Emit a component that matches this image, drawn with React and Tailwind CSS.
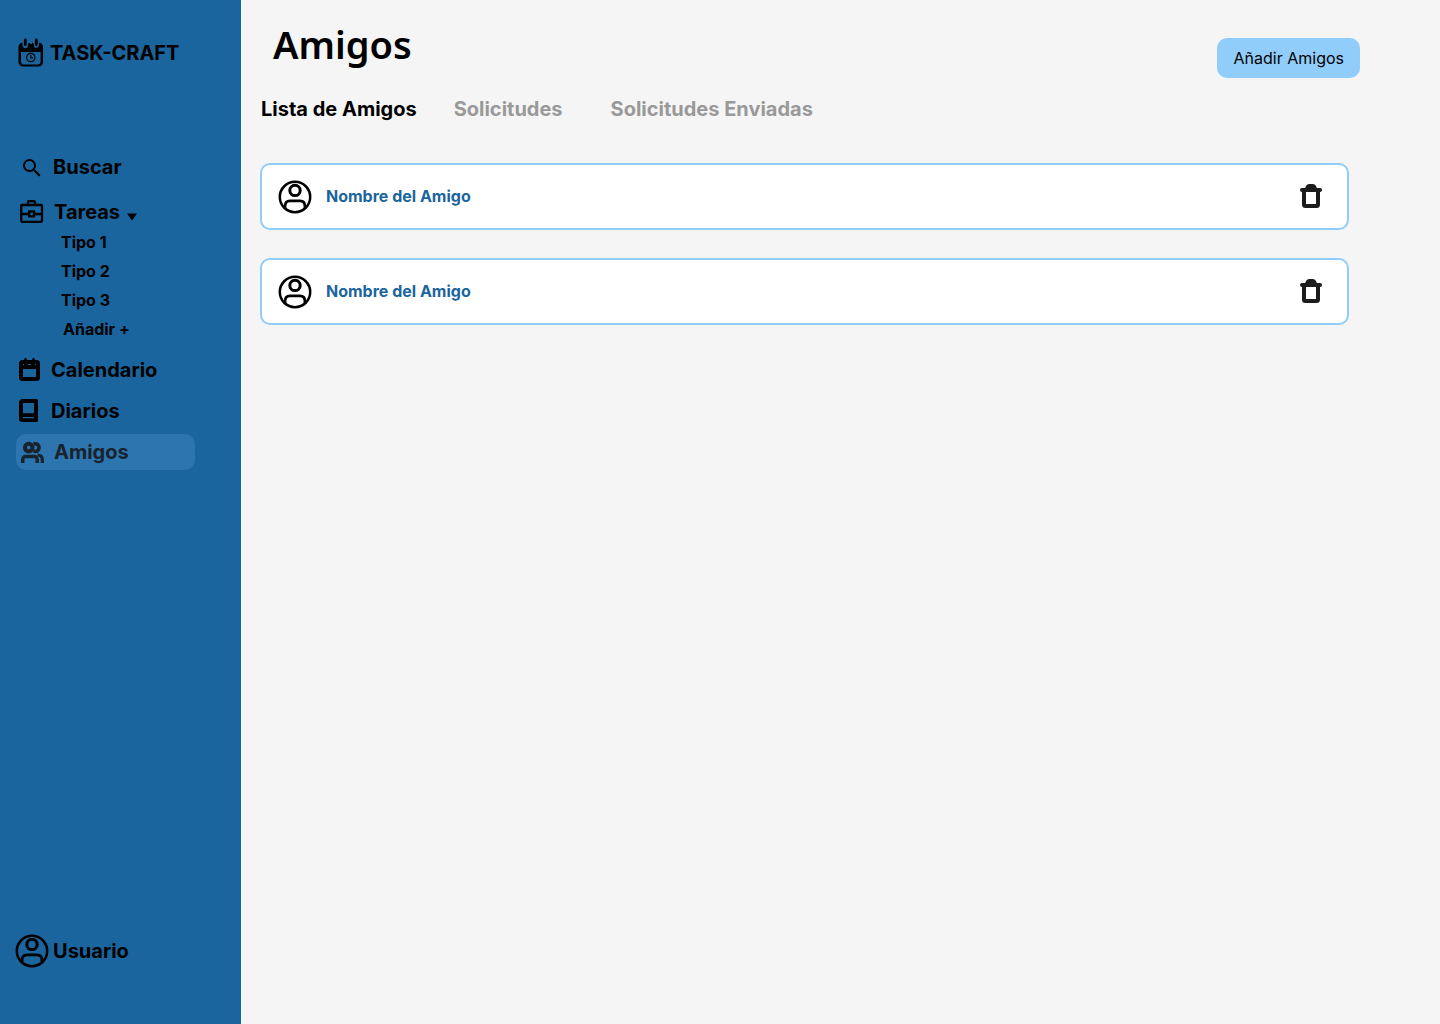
import React from "react";

const icon = { width: 24, height: 24, viewBox: "0 0 24 24", fill: "none", "aria-hidden": true, className: "shrink-0" };

function LogoIcon() {
  return (
    <svg width="26" height="30" viewBox="0 0 26 30" fill="none" className="shrink-0" aria-hidden="true">
      <path fillRule="evenodd" fill="#000" d="M4.500 4.500C2 5 .5 6.500 .5 9v15A4.500 4.500 0 0 0 5 28.500h15.500A4.500 4.500 0 0 0 25 24V9c0-2.500-1.500-4-4-4.500V7a3 3 0 0 1-4.500 2.500L15.500 5H14v1h-2V5h-1.500L9.500 9.500A3 3 0 0 1 4.500 7zM3 14v9.500a3 3 0 0 0 3 3h13.600a3 3 0 0 0 3-3V14z" />
      <path stroke="#000" strokeWidth="2.800" strokeLinecap="round" d="M7.300 2v4.500M18.300 2v4.500" />
      <circle cx="12.800" cy="19.500" r="4.200" stroke="#000" strokeWidth="1.200" />
      <path stroke="#000" strokeWidth="1.200" d="M12.800 17v2.800h2.300" />
    </svg>
  );
}

function SearchIcon() {
  return (
    <svg {...icon} viewBox="0 -1 24 24">
      <path fill="currentColor" d="M15.500 14h-.79l-.28-.27A6.471 6.471 0 0 0 16 9.500 6.500 6.500 0 1 0 9.500 16c1.610 0 3.090-.59 4.230-1.570l.27.28v.79l5 4.990L20.490 19l-4.990-5zm-6 0C7.010 14 5 11.990 5 9.500S7.010 5 9.500 5 14 7.010 14 9.500 11.990 14 9.500 14z" />
    </svg>
  );
}

function BriefcaseIcon() {
  return (
    <svg {...icon} stroke="currentColor" strokeWidth="2.300">
      <rect x="1.200" y="5" width="20.800" height="16.800" rx="1" />
      <path d="M8 5V2.500Q8 1.200 9.500 1.200h4Q15 1.200 15 2.500V5M1 14h8M14 14h8" />
      <rect x="9.200" y="11.500" width="4.800" height="4.800" />
    </svg>
  );
}

function CalendarIcon() {
  return (
    <svg {...icon}>
      <path fillRule="evenodd" fill="currentColor" d="M4.500 2h14A3.500 3.500 0 0 1 22 5.500v14a3.500 3.500 0 0 1-3.500 3.500h-14A3.500 3.500 0 0 1 1 19.500v-14A3.500 3.500 0 0 1 4.500 2zM5 11v8h13v-8z" />
      <path stroke="currentColor" strokeWidth="3" strokeLinecap="round" d="M7.500 1.500v4M15.500 1.500v4" />
      <path stroke="#1b659e" strokeWidth="1" d="M5 6.500h1M10 6.500h3M17 6.500h1" />
    </svg>
  );
}

function BookIcon() {
  return (
    <svg {...icon}>
      <path fillRule="evenodd" fill="currentColor" d="M5 0h13.500A1.500 1.500 0 0 1 20 1.500v20a1.500 1.500 0 0 1-1.500 1.500H4.500A3.500 3.500 0 0 1 1 19.500V4a4 4 0 0 1 4-4zM5 4v10.200h11V4zM5 18v1.200h11V18z" />
    </svg>
  );
}

function FriendsIcon() {
  return (
    <svg {...icon} stroke="currentColor">
      <circle cx="8.700" cy="7.600" r="3.800" strokeWidth="4" />
      <path strokeWidth="3.700" d="M13.500 4.100c3.500-1.200 5.500.8 5.500 3.500s-2 4.700-5.500 3.500" />
      <path strokeWidth="3.500" d="M2.700 23v-3.500a3 3 0 0 1 3-3h8.500a3 3 0 0 1 3 3V23" />
      <path strokeWidth="3.200" d="M17.500 15c3.500 0 4.800 1.500 4.800 4.500V23" />
    </svg>
  );
}

function AvatarIcon() {
  return (
    <svg width="34" height="34" viewBox="0 0 34 34" fill="none" stroke="#000" strokeWidth="2.500" className="shrink-0" aria-hidden="true">
      <circle cx="17" cy="17" r="15.200" />
      <circle cx="17" cy="10.400" r="5.200" strokeWidth="3" />
      <path strokeWidth="2.800" d="M7 28.500v-2c0-3.500 1.500-5.700 5-5.700h10c3.500 0 5 2.200 5 5.700v2" />
    </svg>
  );
}

function TrashIcon() {
  return (
    <svg {...icon}>
      <path stroke="#1c1c1c" strokeWidth="4" strokeLinecap="round" d="M3 6h18" />
      <path fill="#1c1c1c" d="M6 5c0-2 2-5 4-5h4c2 0 4 3 4 5z" />
      <path fillRule="evenodd" fill="#1c1c1c" d="M3 6h18v14.500a3.500 3.500 0 0 1-3.500 3.500h-11A3.500 3.500 0 0 1 3 20.500zM7 8v12h10V8z" />
    </svg>
  );
}

const types = ["Tipo 1", "Tipo 2", "Tipo 3"];
const friends = ["Nombre del Amigo", "Nombre del Amigo"];

function Sidebar() {
  return (
    <aside className="flex w-[241px] shrink-0 flex-col bg-[#1b659e] px-4 pt-[37px] pb-14 text-xl font-bold text-black">
      <a href="#inicio" className="flex h-8 items-center gap-1.5 pl-0.5">
        <LogoIcon />
        TASK-CRAFT
      </a>
      <nav className="mt-20 flex flex-col">
        <a href="#buscar" className="flex h-9 items-center gap-[9px] pl-1">
          <SearchIcon />
          Buscar
        </a>
        <button type="button" aria-expanded="true" className="mt-[11px] flex h-8 items-center gap-2.5 pl-1">
          <BriefcaseIcon />
          <span className="flex items-center gap-1.5">
            Tareas
            <svg width="12" height="8" viewBox="0 0 12 8" className="mt-2.5" aria-hidden="true">
              <path d="M1 .5h10L6 7.500z" />
            </svg>
          </span>
        </button>
        <ul className="-mt-px pl-[45px] text-base">
          {types.map((type) => (
            <li key={type} className="flex h-[29px] items-center">
              <a href="#tareas">{type}</a>
            </li>
          ))}
          <li className="flex h-[29px] items-center pl-0.5">
            <button type="button">Añadir +</button>
          </li>
        </ul>
        <div className="mt-[9px] flex flex-col gap-[5px]">
          <a href="#calendario" className="flex h-9 items-center gap-[9px] pl-0.5">
            <CalendarIcon />
            Calendario
          </a>
          <a href="#diarios" className="flex h-9 items-center gap-[9px] pl-0.5">
            <BookIcon />
            Diarios
          </a>
          <a href="#amigos" aria-current="page" className="mr-[30px] flex h-9 items-center gap-2.5 rounded-[10px] bg-[#2d75af] pl-1 text-[#18232d]">
            <FriendsIcon />
            Amigos
          </a>
        </div>
      </nav>
      <a href="#usuario" className="mt-auto -ml-px flex items-center gap-1">
        <AvatarIcon />
        Usuario
      </a>
    </aside>
  );
}

function FriendCard({ name }) {
  return (
    <li className="flex h-[67px] items-center rounded-[10px] border-2 border-[#90cdfa] bg-white pr-6 pl-4">
      <AvatarIcon />
      <span className="ml-3.5 pb-0.5 font-bold text-[#1b659e]">{name}</span>
      <button type="button" aria-label="Eliminar amigo" className="ml-auto pb-0.5">
        <TrashIcon />
      </button>
    </li>
  );
}

export default function App() {
  return (
    <div className="flex min-h-screen bg-[#f5f5f5] font-['Inter',sans-serif] text-black">
      <Sidebar />
      <main className="min-w-0 flex-1 pl-5">
        <header className="flex items-start justify-between pr-20 pl-3">
          <h1 className="mt-5 pb-1 font-['Noto_Sans',sans-serif] text-[38px] leading-[48px] font-semibold">Amigos</h1>
          <button type="button" className="mt-[38px] h-10 rounded-[10px] bg-[#90cdfa] px-4">
            <span className="pl-px">Añadir Amigos</span>
          </button>
        </header>
        <div role="tablist" className="mt-4 flex text-xl leading-[30px] font-bold text-[#999999]">
          <button type="button" role="tab" aria-selected="true" className="text-black">Lista de Amigos</button>
          <button type="button" role="tab" aria-selected="false" className="ml-[37px]">Solicitudes</button>
          <button type="button" role="tab" aria-selected="false" className="ml-12">Solicitudes Enviadas</button>
        </div>
        <ul className="mt-[39px] mr-[91px] -ml-px flex flex-col gap-7">
          {friends.map((name, i) => (
            <FriendCard key={i} name={name} />
          ))}
        </ul>
      </main>
    </div>
  );
}
